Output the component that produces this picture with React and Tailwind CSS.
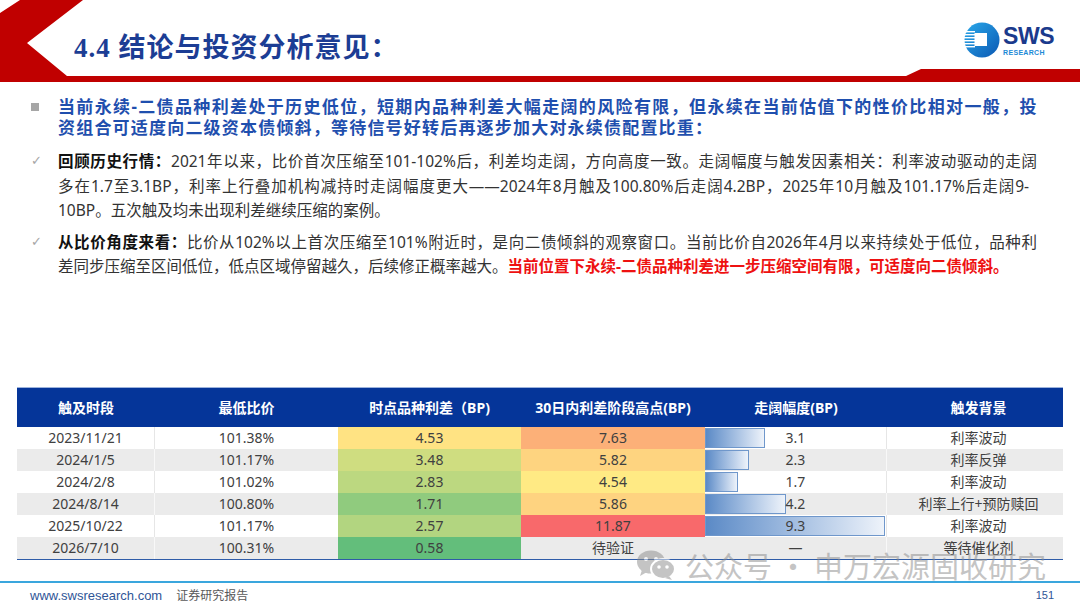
import React from 'react';

const rows = [
  { date: '2023/11/21', ratio: '101.38%', spread: '4.53', spreadBg: 'bg-[#ffe383]', high: '7.63', highBg: 'bg-[#fcb078]', widen: 3.1, reason: '利率波动' },
  { date: '2024/1/5', ratio: '101.17%', spread: '3.48', spreadBg: 'bg-[#cfdd80]', high: '5.82', highBg: 'bg-[#fed480]', widen: 2.3, reason: '利率反弹' },
  { date: '2024/2/8', ratio: '101.02%', spread: '2.83', spreadBg: 'bg-[#bcd880]', high: '4.54', highBg: 'bg-[#ffea84]', widen: 1.7, reason: '利率波动' },
  { date: '2024/8/14', ratio: '100.80%', spread: '1.71', spreadBg: 'bg-[#90cb7e]', high: '5.86', highBg: 'bg-[#fed380]', widen: 4.2, reason: '利率上行+预防赎回' },
  { date: '2025/10/22', ratio: '101.17%', spread: '2.57', spreadBg: 'bg-[#b2d580]', high: '11.87', highBg: 'bg-[#f8696b]', widen: 9.3, reason: '利率波动' },
  { date: '2026/7/10', ratio: '100.31%', spread: '0.58', spreadBg: 'bg-[#63be7b]', high: '待验证', highBg: '', widen: null, reason: '等待催化剂' },
];

const headers = ['触及时段', '最低比价', '时点品种利差（BP)', '30日内利差阶段高点(BP)', '走阔幅度(BP)', '触发背景'];

const Logo = () => (
  <div className="flex items-center gap-[3px]">
    <svg width="36" height="36" viewBox="0 0 36 36">
      <defs>
        <linearGradient id="swsg" x1="0" y1="0" x2="1" y2="1">
          <stop offset="0" stopColor="#2aa9ea" />
          <stop offset="1" stopColor="#0b58b3" />
        </linearGradient>
      </defs>
      <circle cx="18" cy="18" r="17.5" fill="url(#swsg)" />
      <rect x="0" y="9" width="11" height="1.4" fill="#fff" />
      <rect x="0" y="12" width="11" height="1.4" fill="#fff" />
      <rect x="0" y="15" width="11" height="1.4" fill="#fff" />
      <rect x="0" y="18" width="11" height="1.4" fill="#fff" />
      <rect x="0" y="21" width="11" height="1.4" fill="#fff" />
      <rect x="0" y="24" width="11" height="1.4" fill="#fff" />
      <rect x="10.5" y="11" width="12.5" height="13" fill="#fff" />
    </svg>
    <div className="flex flex-col font-['Liberation_Sans',sans-serif] font-bold leading-none">
      <span className="text-[23px] text-[#1b3a8c] tracking-[-0.5px]">SWS</span>
      <span className="text-[7px] text-[#1c8ad6] tracking-[0.3px] mt-[1px]">RESEARCH</span>
    </div>
  </div>
);

const WeChat = () => (
  <svg width="40" height="32" viewBox="0 0 40 32">
    <ellipse cx="15" cy="13" rx="14" ry="11.5" fill="#8a8a8a" />
    <path d="M6 21 L4 27 L11 23 Z" fill="#8a8a8a" />
    <circle cx="10" cy="10" r="2" fill="#fff" />
    <circle cx="20" cy="10" r="2" fill="#fff" />
    <ellipse cx="27" cy="20" rx="12" ry="10" fill="#8a8a8a" stroke="#fff" strokeWidth="2" />
    <path d="M33 27 L36 31 L29 29 Z" fill="#8a8a8a" />
    <circle cx="23" cy="18" r="1.8" fill="#fff" />
    <circle cx="31" cy="18" r="1.8" fill="#fff" />
  </svg>
);

const App = () => {
  return (
    <div className="relative w-[1080px] h-[608px] bg-white overflow-hidden font-['Noto_Sans','Noto_Sans_CJK_SC',sans-serif]">
      {/* header */}
      <div className="relative h-[82px]">
        <svg className="absolute inset-0" width="1080" height="82" viewBox="0 0 1080 82">
          <polygon points="20,0 83,0 27,43 67,76 906,76 921,69 1080,69 1080,82 0,82 0,13" fill="#c00000" />
        </svg>
        <div className="relative flex items-start justify-between pt-[22px] pl-[74px] pr-[26px]">
          <h1 className="mt-[7px] text-[27px] leading-[34px] font-bold text-[#1c3d94] tracking-[1px]">
            <span className="font-['Liberation_Serif',serif]">4.4 </span>
            <span className="font-['Noto_Sans_CJK_SC',sans-serif]">结论与投资分析意见：</span>
          </h1>
          <Logo />
        </div>
      </div>

      {/* text */}
      <div className="h-[305px] pt-[14px] pl-[28px] pr-[43px]">
        <div className="flex">
          <div className="w-[30px] shrink-0 pt-[7px] pl-[3px]">
            <div className="w-[8px] h-[8px] bg-[#a6a6a6]" />
          </div>
          <div className="flex-1 text-[17px] leading-[21px] font-bold text-[#1f4fae]">
            <div className="tracking-[0.5px] text-justify [text-align-last:justify]">当前永续-二债品种利差处于历史低位，短期内品种利差大幅走阔的风险有限，但永续在当前估值下的性价比相对一般，投</div>
            <div className="tracking-[1.2px]">资组合可适度向二级资本债倾斜，等待信号好转后再逐步加大对永续债配置比重：</div>
          </div>
        </div>

        <div className="flex mt-[11px] text-[15.5px] leading-[24.5px] text-[#333333]">
          <div className="w-[30px] shrink-0 pl-[3px] text-[13px] text-[#a6a6a6] font-['DejaVu_Sans',sans-serif]">✓</div>
          <div className="flex-1">
            <div className="text-justify [text-align-last:justify]"><b className="text-[#111]">回顾历史行情：</b>2021年以来，比价首次压缩至101-102%后，利差均走阔，方向高度一致。走阔幅度与触发因素相关：利率波动驱动的走阔</div>
            <div className="mr-[8px] text-justify [text-align-last:justify]">多在1.7至3.1BP，利率上行叠加机构减持时走阔幅度更大——2024年8月触及100.80%后走阔4.2BP，2025年10月触及101.17%后走阔9-</div>
            <div>10BP。五次触及均未出现利差继续压缩的案例。</div>
          </div>
        </div>

        <div className="flex mt-[7px] text-[15.5px] leading-[24.5px] text-[#333333]">
          <div className="w-[30px] shrink-0 pl-[3px] text-[13px] text-[#a6a6a6] font-['DejaVu_Sans',sans-serif]">✓</div>
          <div className="flex-1">
            <div className="text-justify [text-align-last:justify]"><b className="text-[#111]">从比价角度来看：</b>比价从102%以上首次压缩至101%附近时，是向二债倾斜的观察窗口。当前比价自2026年4月以来持续处于低位，品种利</div>
            <div>差同步压缩至区间低位，低点区域停留越久，后续修正概率越大。<b className="text-[#ee1111]">当前位置下永续-二债品种利差进一步压缩空间有限，可适度向二债倾斜。</b></div>
          </div>
        </div>
      </div>

      {/* table */}
      <div className="mx-[17px] border-b border-[#2f5ca8]">
        <div className="grid grid-cols-[138px_183px_183px_184px_182px_183px] h-[40px] bg-[#053599] border-t border-[#9db3dc]">
          {headers.map(h => (
            <div key={h} className="flex items-center justify-center text-[14px] font-bold text-white">{h}</div>
          ))}
        </div>
        {rows.map((r, i) => {
          const gray = i % 2 === 1;
          const line = gray ? 'border-[#f8f8f8]' : 'border-[#e6e6e6]';
          return (
            <div key={r.date} className={`grid grid-cols-[138px_183px_183px_184px_182px_183px] h-[22px] text-[14px] leading-[22px] text-center text-[#404040] ${gray ? 'bg-[#ebebeb]' : 'bg-white'}`}>
              <div className={`border-r ${line}`}>{r.date}</div>
              <div>{r.ratio}</div>
              <div className={r.spreadBg}>{r.spread}</div>
              <div className={r.highBg}>{r.high}</div>
              <div className={`relative border-r ${line}`}>
                {r.widen !== null && (
                  <div
                    className="absolute left-0 top-[1px] bottom-[1px] border border-[#6f97cb] bg-linear-to-r from-[#5b8ac6] to-[#eef3fa]"
                    style={{ width: `${(r.widen / 9.3) * 99.4}%` }}
                  />
                )}
                <span className="relative">{r.widen !== null ? r.widen.toFixed(1) : '—'}</span>
              </div>
              <div>{r.reason}</div>
            </div>
          );
        })}
      </div>

      {/* footer */}
      <div className="mt-[21px] h-[2px] bg-[#3aa6dd]" />
      <div className="flex items-center h-[25px] pl-[30px] pr-[26px]">
        <span className="text-[13px] text-[#2f5597] font-['Liberation_Sans',sans-serif]">www.swsresearch.com</span>
        <span className="ml-[14px] text-[12px] text-[#595959]">证券研究报告</span>
        <span className="ml-auto text-[11px] text-[#2f5597] font-['Liberation_Sans',sans-serif]">151</span>
      </div>

      {/* watermark */}
      <div className="absolute left-[636px] top-[548px] flex items-center gap-[9px] opacity-50 pointer-events-none">
        <WeChat />
        <span className="text-[29px] leading-[34px] text-[#8a8a8a] font-['Noto_Sans_CJK_SC',sans-serif]">公众号 · 申万宏源固收研究</span>
      </div>
    </div>
  );
};

export default App;
